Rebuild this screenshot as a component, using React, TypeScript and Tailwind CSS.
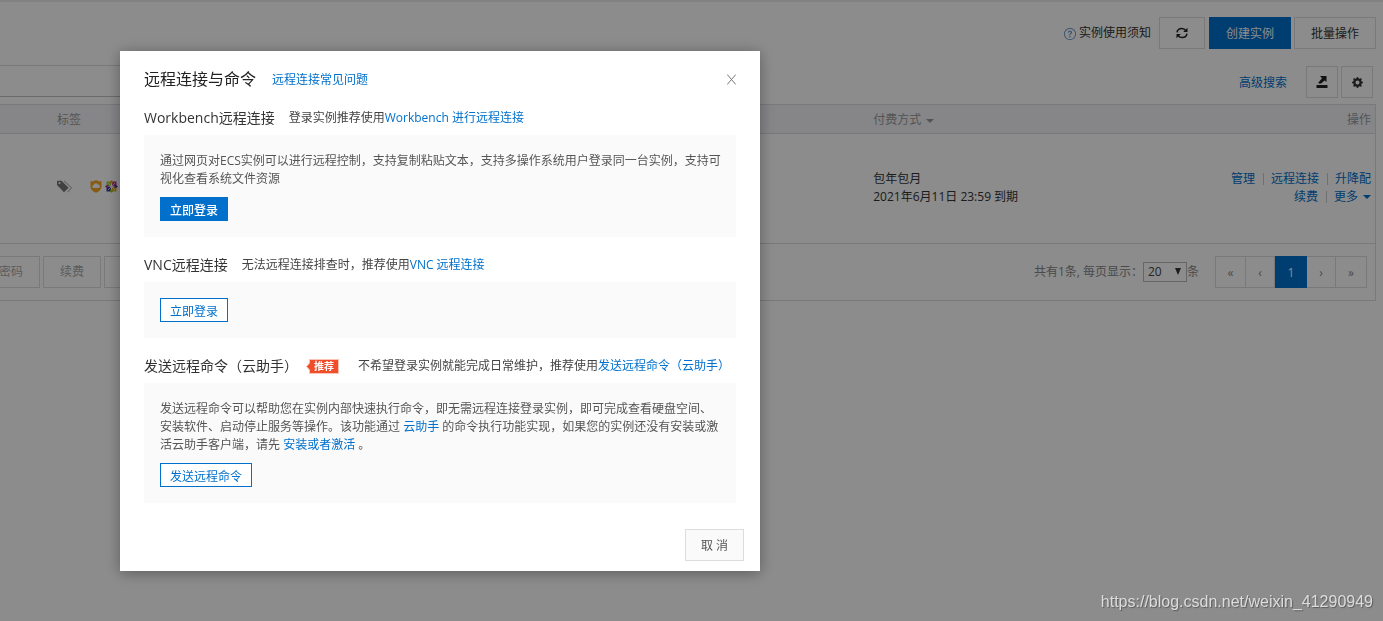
import { useState } from 'react'
import type { ReactNode } from 'react'
import { BsGearFill, BsQuestionCircle } from 'react-icons/bs'

const pages = [
  { label: '«', width: 'w-[30px]' },
  { label: '‹', width: 'w-[29px]' },
  { label: '1', width: 'w-8' },
  { label: '›', width: 'w-[29px]' },
  { label: '»', width: 'w-[30px]' },
]

export default function App() {
  const [open, setOpen] = useState(true)

  return (
    <div className="min-h-screen overflow-hidden bg-white text-xs leading-[18px] text-[#333] font-['Open_Sans','Noto_Sans_CJK_SC',sans-serif]">
      <InstancePage onConnect={() => setOpen(true)} />
      {open && <ConnectDialog onClose={() => setOpen(false)} />}
      <div className="fixed right-[10px] bottom-[7px] z-20 font-['Liberation_Sans',sans-serif] text-base leading-6 text-[#dcdcdc] [text-shadow:1px_1px_1px_rgba(0,0,0,0.35)]">
        https://blog.csdn.net/weixin_41290949
      </div>
    </div>
  )
}

function InstancePage({ onConnect }: { onConnect: () => void }) {
  const [pageSize, setPageSize] = useState('20')
  const [keyword, setKeyword] = useState('')

  return (
    <main className="border-t-2 border-[#ececec] pr-[7px]">
      <div className="flex items-center justify-end pt-[15px]">
        <a href="#notice" className="flex items-center gap-[3px] mr-2">
          <BsQuestionCircle size={12} className="mt-[2px] text-[#4a80c8]" />
          实例使用须知
        </a>
        <button aria-label="刷新" className="flex items-center justify-center w-[46px] h-8 mr-1 border border-[#ddd]">
          <RefreshIcon />
        </button>
        <button className="h-8 px-[17px] pt-[2px] mr-[3px] bg-[#0070cc] text-white">创建实例</button>
        <button className="h-8 px-4 pt-[2px] border border-[#ddd]">批量操作</button>
      </div>

      <div className="flex items-start justify-between mt-4 pr-[3px]">
        <input
          aria-label="搜索实例"
          value={keyword}
          onChange={(e) => setKeyword(e.target.value)}
          className="w-1/3 h-8 px-2 border border-l-0 border-[#ddd] border-b-[#c4c4c4] outline-none"
        />
        <div className="flex items-center pt-px">
          <a href="#search" className="pt-[2px] mr-[19px] text-[#0070cc]">高级搜索</a>
          <button aria-label="导出" className="flex items-center justify-center size-8 mr-[3px] border border-[#ddd]">
            <ExportIcon />
          </button>
          <button aria-label="设置" className="flex items-center justify-center size-8 border border-[#ddd]">
            <BsGearFill size={11} />
          </button>
        </div>
      </div>

      <div className="mt-[6px] border border-l-0 border-[#dcdce0]">
        <table className="w-full text-left">
          <thead>
            <tr className="h-7 bg-[#f4f4f9] text-[#999]">
              <th className="w-[63%] pt-[2px] pl-[57px] font-normal">标签</th>
              <th className="pt-[2px] pl-[7px] font-normal">
                付费方式
                <Caret className="inline ml-[5px]" />
              </th>
              <th className="pt-[2px] pr-1 text-right font-normal">操作</th>
            </tr>
          </thead>
          <tbody>
            <tr className="h-[110px] border-y border-[#dcdce0]">
              <td className="pl-[57px] pb-[3px]">
                <div className="flex items-center">
                  <TagIcon />
                  <ShieldIcon />
                  <ClusterIcon />
                </div>
              </td>
              <td className="pl-[7px]">
                <div>包年包月</div>
                <div>2021年6月11日 23:59 到期</div>
              </td>
              <td className="pr-1">
                <div className="flex items-center justify-end text-[#0070cc]">
                  <a href="#manage">管理</a>
                  <Divider />
                  <button onClick={onConnect}>远程连接</button>
                  <Divider />
                  <a href="#upgrade">升降配</a>
                </div>
                <div className="flex items-center justify-end text-[#0070cc]">
                  <a href="#renew">续费</a>
                  <Divider />
                  <button className="flex items-center gap-[5px]">
                    更多
                    <Caret />
                  </button>
                </div>
              </td>
            </tr>
          </tbody>
        </table>

        <div className="flex items-center justify-between h-14 pr-2">
          {/* the bulk actions run past the left edge of the window */}
          <div className="flex gap-[3px] -ml-[42px] text-[#aaa]">
            <button className="h-8 px-4 pt-px border border-[#ddd]">重置密码</button>
            <button className="h-8 px-4 pt-px border border-[#ddd]">续费</button>
            <button className="h-8 px-4 pt-px border border-[#ddd]">更多</button>
          </div>
          <div className="flex items-center text-[#888]">
            <label htmlFor="page-size">共有1条, 每页显示：</label>
            <div className="relative">
              <select
                id="page-size"
                value={pageSize}
                onChange={(e) => setPageSize(e.target.value)}
                className="block appearance-none w-11 h-5 pl-1 border border-[#bbb] text-[#444] leading-[18px]"
              >
                <option>20</option>
                <option>50</option>
                <option>100</option>
              </select>
              <svg width="6" height="7" viewBox="0 0 6 7" className="absolute right-[6px] top-[6px] pointer-events-none fill-[#333]">
                <path d="M0 0h6L3 7z" />
              </svg>
            </div>
            <span>条</span>
            <div className="flex ml-4 h-8 border border-[#ddd]">
              {pages.map((p) =>
                p.label === '1' ? (
                  <button key={p.label} className={`${p.width} -my-px pt-[2px] bg-[#0070cc] text-white`}>{p.label}</button>
                ) : (
                  <button key={p.label} className={`${p.width} pt-[2px] border-r border-[#ddd] last:border-r-0`}>{p.label}</button>
                )
              )}
            </div>
          </div>
        </div>
      </div>
    </main>
  )
}

function ConnectDialog({ onClose }: { onClose: () => void }) {
  return (
    <div className="fixed inset-0 z-10 flex items-start pt-[51px] pl-[120px] bg-black/45">
      <div role="dialog" aria-labelledby="dialog-title" className="w-full max-w-[640px] bg-white shadow-[0_2px_14px_rgba(0,0,0,0.35)]">
        <div className="flex items-center gap-4 pt-[17px] px-6">
          <h1 id="dialog-title" className="text-base leading-[22px] text-[#222]">远程连接与命令</h1>
          <a href="#faq" className="pt-px text-[#0070cc]">远程连接常见问题</a>
          <button aria-label="关闭" onClick={onClose} className="ml-auto">
            <svg width="9" height="11" viewBox="0 0 9 11" className="stroke-[#777]">
              <path d="M.2.500l8.600 10M8.800.500l-8.600 10" fill="none" />
            </svg>
          </button>
        </div>

        <div className="px-6">
          <Section title="Workbench远程连接" hint="登录实例推荐使用" link="Workbench 进行远程连接">
            <p className="-mr-1 pt-px mb-[9px]">
              通过网页对ECS实例可以进行远程控制，支持复制粘贴文本，支持多操作系统用户登录同一台实例，支持可视化查看系统文件资源
            </p>
            <button className="block h-6 px-[10px] pt-[3px] bg-[#0070cc] text-white font-medium">立即登录</button>
          </Section>
          <Section title="VNC远程连接" hint="无法远程连接排查时，推荐使用" link="VNC 远程连接">
            <button className="block h-6 px-[9px] pt-[3px] border border-[#0070cc] bg-white text-[#0070cc]">立即登录</button>
          </Section>
          <Section title="发送远程命令（云助手）" badge="推荐" hint="不希望登录实例就能完成日常维护，推荐使用" link="发送远程命令（云助手）">
            <p className="pt-px mb-[9px]">
              发送远程命令可以帮助您在实例内部快速执行命令，即无需远程连接登录实例，即可完成查看硬盘空间、安装软件、启动停止服务等操作。该功能通过{' '}
              <a href="#assistant" className="text-[#0070cc]">云助手</a>{' '}
              的命令执行功能实现，如果您的实例还没有安装或激活云助手客户端，请先{' '}
              <a href="#install" className="text-[#0070cc]">安装或者激活</a> 。
            </p>
            <button className="block h-6 px-[9px] pt-[3px] border border-[#0070cc] bg-white text-[#0070cc]">发送远程命令</button>
          </Section>
        </div>

        <div className="flex justify-end pt-[26px] pb-[10px] pr-4">
          <button onClick={onClose} className="h-8 px-[15px] pt-[2px] border border-[#ddd] bg-[#fafafa] text-[#555]">取 消</button>
        </div>
      </div>
    </div>
  )
}

function Section({ title, badge, hint, link, children }: {
  title: string
  badge?: string
  hint: string
  link: string
  children: ReactNode
}) {
  return (
    <section className="mt-4">
      <div className="flex items-center h-6 mb-[5px] whitespace-nowrap">
        <h2 className="text-sm leading-5 text-[#333]">{title}</h2>
        {badge && (
          <span className="relative ml-2 mr-[5px] w-[33px] h-[15px] pl-2 text-[10px] leading-[15px] font-bold text-white">
            <svg width="33" height="15" viewBox="0 0 33 15" className="absolute inset-0">
              <path d="M3.500.5h29v14h-29v-3.500L.5 7.500l3-3.500z" fill="#f04e2b" stroke="#fbc4b4" />
            </svg>
            <span className="relative">{badge}</span>
          </span>
        )}
        <span className="ml-[14px] text-[#444]">
          {hint}
          <a href="#connect" className="text-[#0070cc]">{link}</a>
        </span>
      </div>
      <div className="p-4 bg-[#fafafa] text-[#555]">{children}</div>
    </section>
  )
}

function Divider() {
  return <span className="w-px h-3 ml-2 mr-[7px] bg-[#ccc]" />
}

function Caret({ className = '' }: { className?: string }) {
  return (
    <svg width="8" height="4" viewBox="0 0 8 4" className={className}>
      <path d="M0 0h8L4 4z" fill="currentColor" />
    </svg>
  )
}

function RefreshIcon() {
  return (
    <svg width="12" height="12" viewBox="0 0 12 12">
      <path d="M1 5.300C1.400 2.900 3.300 1.400 5.800 1.400c1.800 0 3.200.8 4.100 2.200M11 6.700c-.4 2.400-2.300 3.900-4.800 3.900-1.800 0-3.200-.8-4.100-2.200" fill="none" stroke="#222" strokeWidth="1.500" />
      <path d="M11.500.8v4.300H7.200zM.5 11.200V6.900h4.300z" fill="#222" />
    </svg>
  )
}

function ExportIcon() {
  return (
    <svg width="12" height="12" viewBox="0 0 12 12" fill="#222">
      <path d="M.5 9h11v3H.5zM4 0h6.500v6L8.500 4.500 5.200 7.500H2.500V6.500L6 2.200z" />
    </svg>
  )
}

function TagIcon() {
  return (
    <svg width="16" height="13" viewBox="0 0 16 13" className="mr-[17px]">
      <path d="M0 1v4l7 7.200 4.600-4.400L4.600.7H.6zM2.500 2a1 1 0 110 2 1 1 0 010-2z" fill="#777" fillRule="evenodd" />
      <path d="M7 .8l7.500 7-4 4.400" fill="none" stroke="#999" />
    </svg>
  )
}

function ShieldIcon() {
  return (
    <svg width="12" height="13" viewBox="0 0 12 13" className="mr-[3px]">
      <path d="M6 0c1.700 1.200 3.600 1.500 5.500 1.200v5.300c0 3-2.300 5-5.500 6.300C2.800 11.500.5 9.500.5 6.500V1.200C2.400 1.500 4.300 1.200 6 0z" fill="#f5a623" />
      <path d="M3.800 8a1.500 1.500 0 01-.2-3A2.400 2.400 0 018 4.600 1.700 1.700 0 018.300 8z" fill="#fff" />
    </svg>
  )
}

// CentOS mark
function ClusterIcon() {
  return (
    <svg width="13" height="13" viewBox="0 0 13 13">
      <path d="M1.500 1.500H6v4.700H1.500z" fill="#9ccd2a" />
      <path d="M7 1.500h4.500v4.700H7z" fill="#b0309a" />
      <path d="M1.500 6.800H6v4.700H1.500z" fill="#3a3aa0" />
      <path d="M7 6.800h4.500v4.700H7z" fill="#efa724" />
      <path d="M6.500 0l1.300 1.500v2H5.200v-2z" fill="#efa724" />
      <path d="M13 6.500l-1.500 1.300h-2V5.200h2z" fill="#3a3aa0" />
      <path d="M6.500 13l-1.300-1.500v-2h2.600v2z" fill="#9ccd2a" />
      <path d="M0 6.500l1.500-1.300h2v2.600h-2z" fill="#b0309a" />
      <path d="M2.800 2.800l7.400 7.400M10.200 2.800l-7.400 7.400" stroke="#eee" strokeWidth=".8" />
    </svg>
  )
}
